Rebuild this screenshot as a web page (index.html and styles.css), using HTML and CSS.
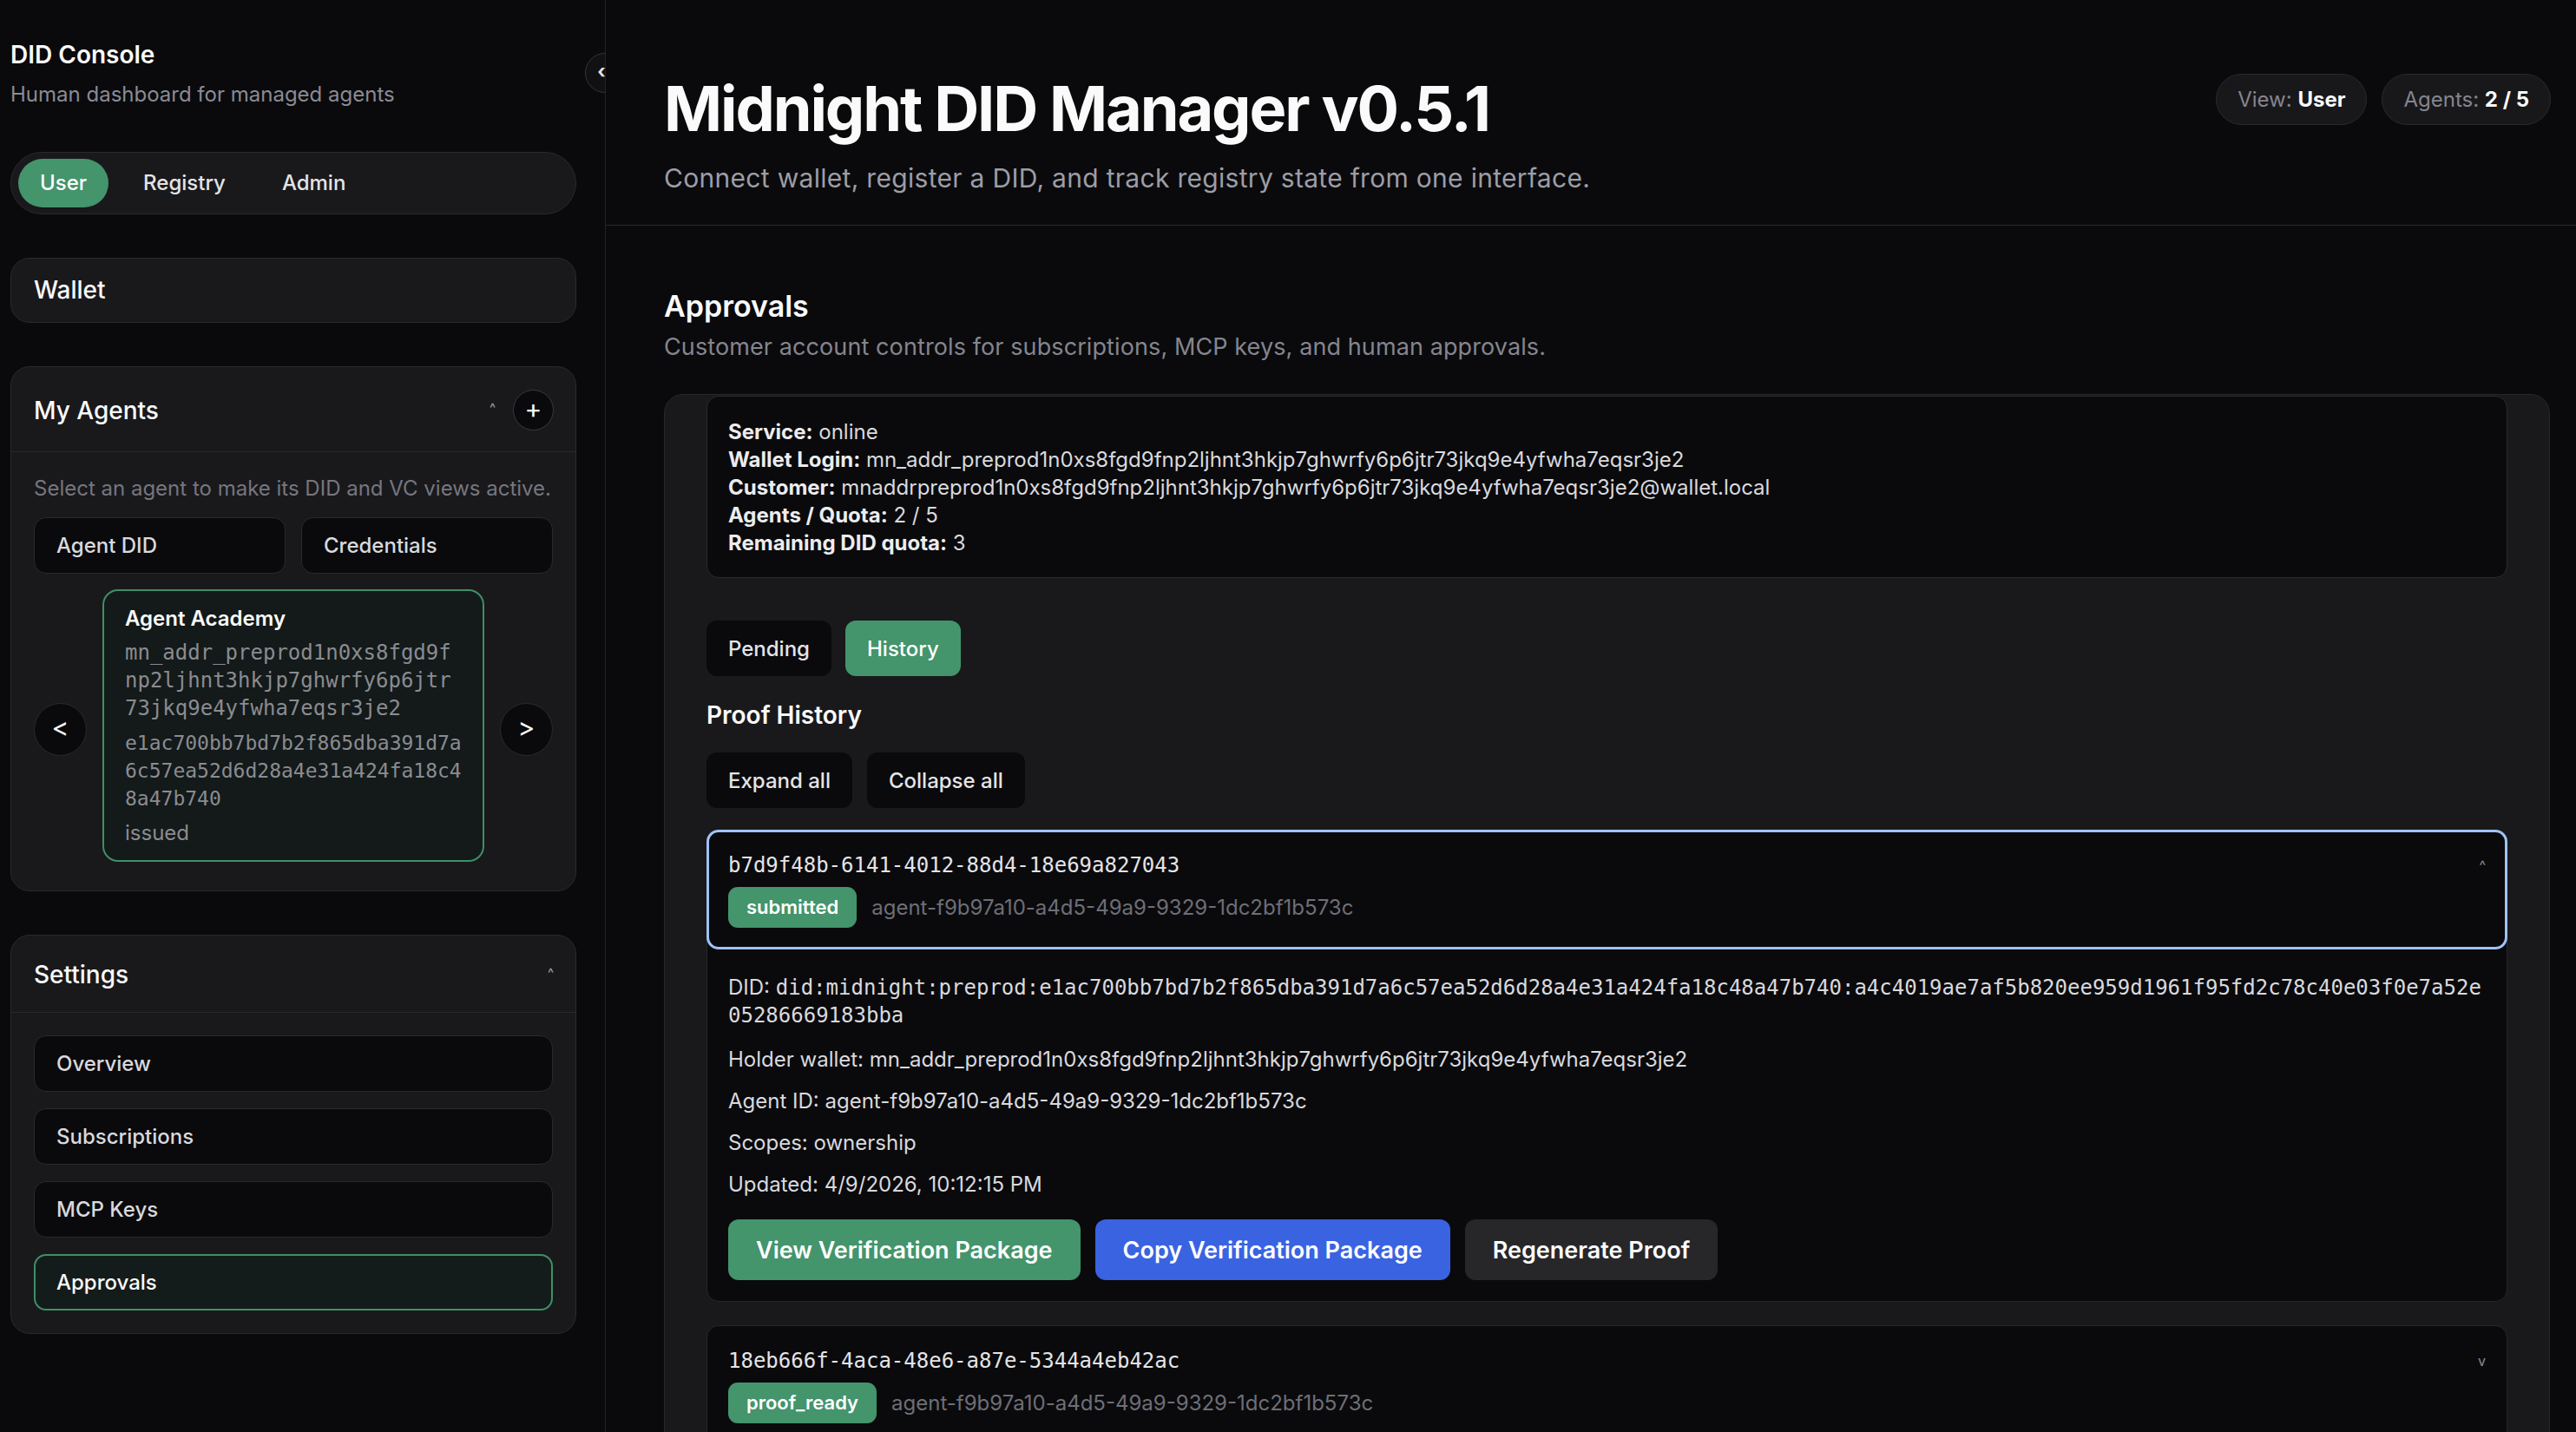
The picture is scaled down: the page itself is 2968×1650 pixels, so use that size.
FILE: index.html
```html
<!DOCTYPE html>
<html lang="en">
<head>
<meta charset="utf-8">
<title>Midnight DID Manager</title>
<link rel="stylesheet" href="styles.css">
</head>
<body>
<div class="app">
  <aside class="sidebar">
    <button class="collapse" aria-label="Collapse sidebar">&lsaquo;</button>
    <div class="brand">
      <div class="brand-title">DID Console</div>
      <div class="brand-sub">Human dashboard for managed agents</div>
    </div>

    <nav class="seg">
      <span class="seg-item active">User</span>
      <span class="seg-item">Registry</span>
      <span class="seg-item">Admin</span>
    </nav>

    <section class="card card-simple">
      <div class="card-title">Wallet</div>
    </section>

    <section class="card">
      <header class="card-head">
        <div class="card-title">My Agents</div>
        <div class="head-actions">
          <span class="caret">^</span>
          <button class="plus-btn" aria-label="Add agent">+</button>
        </div>
      </header>
      <div class="card-body">
        <p class="hint">Select an agent to make its DID and VC views active.</p>
        <div class="pair">
          <button class="dark-btn">Agent DID</button>
          <button class="dark-btn">Credentials</button>
        </div>
        <div class="carousel">
          <button class="nav-btn">&lt;</button>
          <div class="agent-card">
            <div class="agent-name">Agent Academy</div>
            <div class="agent-addr">mn_addr_preprod1n0xs8fgd9fnp2ljhnt3hkjp7ghwrfy6p6jtr73jkq9e4yfwha7eqsr3je2</div>
            <div class="agent-hash">e1ac700bb7bd7b2f865dba391d7a6c57ea52d6d28a4e31a424fa18c48a47b740</div>
            <div class="agent-status">issued</div>
          </div>
          <button class="nav-btn">&gt;</button>
        </div>
      </div>
    </section>

    <section class="card">
      <header class="card-head">
        <div class="card-title">Settings</div>
        <span class="caret">^</span>
      </header>
      <div class="card-body settings-body">
        <button class="dark-btn">Overview</button>
        <button class="dark-btn">Subscriptions</button>
        <button class="dark-btn">MCP Keys</button>
        <button class="dark-btn active">Approvals</button>
      </div>
    </section>
  </aside>

  <main class="main">
    <header class="topbar">
      <div>
        <h1 class="title">Midnight DID Manager v0.5.1</h1>
        <p class="subtitle">Connect wallet, register a DID, and track registry state from one interface.</p>
      </div>
      <div class="pills">
        <span class="pill">View: <b>User</b></span>
        <span class="pill">Agents: <b>2 / 5</b></span>
      </div>
    </header>

    <section class="content">
      <h2 class="section-title">Approvals</h2>
      <p class="section-sub">Customer account controls for subscriptions, MCP keys, and human approvals.</p>

      <div class="panel">
        <div class="info">
          <div><b>Service:</b> online</div>
          <div><b>Wallet Login:</b> mn_addr_preprod1n0xs8fgd9fnp2ljhnt3hkjp7ghwrfy6p6jtr73jkq9e4yfwha7eqsr3je2</div>
          <div><b>Customer:</b> mnaddrpreprod1n0xs8fgd9fnp2ljhnt3hkjp7ghwrfy6p6jtr73jkq9e4yfwha7eqsr3je2@wallet.local</div>
          <div><b>Agents / Quota:</b> 2 / 5</div>
          <div><b>Remaining DID quota:</b> 3</div>
        </div>

        <div class="btn-row tabs">
          <button class="tab">Pending</button>
          <button class="tab active">History</button>
        </div>

        <h3 class="sub-title">Proof History</h3>

        <div class="btn-row expand">
          <button class="tab">Expand all</button>
          <button class="tab">Collapse all</button>
        </div>

        <div class="items">
          <article class="item">
            <div class="item-head focused">
              <div class="item-main">
                <div class="item-id">b7d9f48b-6141-4012-88d4-18e69a827043</div>
                <div class="item-meta">
                  <span class="badge">submitted</span>
                  <span class="agent-ref">agent-f9b97a10-a4d5-49a9-9329-1dc2bf1b573c</span>
                </div>
              </div>
              <span class="chev">^</span>
            </div>
            <div class="item-body">
              <p class="did-line">DID: <span class="mono">did:midnight:preprod:e1ac700bb7bd7b2f865dba391d7a6c57ea52d6d28a4e31a424fa18c48a47b740:a4c4019ae7af5b820ee959d1961f95fd2c78c40e03f0e7a52e05286669183bba</span></p>
              <p>Holder wallet: mn_addr_preprod1n0xs8fgd9fnp2ljhnt3hkjp7ghwrfy6p6jtr73jkq9e4yfwha7eqsr3je2</p>
              <p>Agent ID: agent-f9b97a10-a4d5-49a9-9329-1dc2bf1b573c</p>
              <p>Scopes: ownership</p>
              <p>Updated: 4/9/2026, 10:12:15 PM</p>
              <div class="actions">
                <button class="act green">View Verification Package</button>
                <button class="act blue">Copy Verification Package</button>
                <button class="act gray">Regenerate Proof</button>
              </div>
            </div>
          </article>

          <article class="item">
            <div class="item-head">
              <div class="item-main">
                <div class="item-id">18eb666f-4aca-48e6-a87e-5344a4eb42ac</div>
                <div class="item-meta">
                  <span class="badge">proof_ready</span>
                  <span class="agent-ref">agent-f9b97a10-a4d5-49a9-9329-1dc2bf1b573c</span>
                </div>
              </div>
              <span class="chev">v</span>
            </div>
          </article>
        </div>
      </div>
    </section>
  </main>
</div>
</body>
</html>
```

FILE: styles.css
```css
* { box-sizing: border-box; }
html, body { margin: 0; height: 100%; }
body {
  background: #0a0a0c;
  color: #e4e4e7;
  font-family: Inter, "Noto Sans", sans-serif;
  overflow: hidden;
}
button { font-family: inherit; cursor: pointer; }
p { margin: 0; }

.app { display: flex; height: 100vh; }

/* ---------- Sidebar ---------- */
.sidebar {
  position: relative;
  overflow: hidden;
  width: 698px;
  flex: none;
  border-right: 1px solid #232327;
  padding: 45px 33px 0 12px;
  display: flex;
  flex-direction: column;
  gap: 50px;
}
.collapse {
  position: absolute;
  top: 61px;
  right: -23px;
  width: 46px;
  height: 46px;
  border-radius: 50%;
  border: 1px solid #35353a;
  background: #111113;
  color: #e4e4e7;
  font-size: 22px;
  font-weight: 700;
  padding: 0 8px 4px 0;
  display: flex;
  align-items: center;
  justify-content: center;
}
.brand-title { font-size: 28px; line-height: 36px; font-weight: 600; color: #fafafa; }
.brand-sub { margin-top: 12px; font-size: 24px; line-height: 32px; color: #8b8b94; }

.seg {
  display: flex;
  gap: 15px;
  padding: 7px 8px;
  border: 1px solid #2a2a2e;
  border-radius: 999px;
  background: #19191c;
}
.seg-item {
  font-size: 24px;
  line-height: 32px;
  padding: 12px 25px;
  border-radius: 999px;
  color: #e4e4e7;
  font-weight: 500;
}
.seg-item.active { background: #44946c; color: #fff; }

.card {
  background: #19191c;
  border: 1px solid #2a2a2e;
  border-radius: 22px;
}
.card-simple { padding: 18px 26px; }
.card-title { font-size: 28px; line-height: 38px; font-weight: 500; color: #fafafa; }
.card-simple .card-title { line-height: 37px; }
.card-head {
  display: flex;
  align-items: center;
  justify-content: space-between;
  padding: 26px 25px 24px 26px;
  border-bottom: 1px solid #2a2a2e;
}
.head-actions { display: flex; align-items: center; gap: 20px; }
.caret { font-size: 15px; color: #a1a1aa; line-height: 1; margin-top: -6px; }
.plus-btn {
  width: 47px;
  height: 47px;
  border-radius: 50%;
  border: 1px solid #3a3a3f;
  background: #0a0a0c;
  color: #fafafa;
  font-size: 30px;
  font-weight: 400;
  line-height: 1;
  padding: 0 0 3px;
  display: flex;
  align-items: center;
  justify-content: center;
}
.card-body {
  padding: 26px;
  display: flex;
  flex-direction: column;
  gap: 18px;
}
.settings-body { gap: 19px; }
.hint { font-size: 24px; line-height: 32px; color: #76767e; margin-bottom: -1px; }
.pair { display: grid; grid-template-columns: 1fr 1fr; gap: 18px; }
.dark-btn {
  height: 65px;
  text-align: left;
  padding: 0 25px;
  font-size: 24px;
  font-weight: 500;
  color: #d9d9de;
  background: #0a0a0c;
  border: 1px solid #2a2a2e;
  border-radius: 14px;
}
.dark-btn.active { border: 2px solid #3f8f66; background: #141c1b; color: #fafafa; padding-left: 24px; }

.carousel {
  display: grid;
  grid-template-columns: 61px 1fr 61px;
  gap: 18px;
  align-items: center;
  padding-bottom: 7px;
}
.nav-btn {
  width: 61px;
  height: 61px;
  margin-top: 8px;
  border-radius: 50%;
  border: 1px solid #2a2a2e;
  background: #0a0a0c;
  color: #fafafa;
  font-size: 30px;
  padding: 0 0 4px;
  display: flex;
  align-items: center;
  justify-content: center;
}
.agent-card {
  border: 2px solid #3f8f66;
  background: #131a19;
  border-radius: 18px;
  padding: 16px 24px 15px;
  display: flex;
  flex-direction: column;
  gap: 8px;
}
.agent-name { font-size: 24px; line-height: 32px; font-weight: 600; color: #fafafa; margin-bottom: -1px; }
.agent-addr, .agent-hash {
  font-family: "DejaVu Sans Mono", monospace;
  color: #8b8b92;
  line-height: 32px;
  word-break: break-all;
}
.agent-addr { font-size: 24px; }
.agent-hash { font-size: 23px; }
.agent-status { font-size: 24px; line-height: 32px; color: #8b8b92; }

/* ---------- Main ---------- */
.main { flex: 1; min-width: 0; overflow: hidden; }
.topbar {
  display: flex;
  justify-content: space-between;
  align-items: flex-start;
  padding: 85px 29px 34px 67px;
  border-bottom: 1px solid #27272a;
}
.title {
  margin: 0;
  font-size: 72px;
  line-height: 79px;
  font-weight: 700;
  letter-spacing: -2.1px;
  color: #fafafa;
}
.subtitle {
  margin-top: 21px;
  font-size: 30px;
  line-height: 40px;
  letter-spacing: 0.3px;
  color: #9d9da6;
}
.pills { display: flex; gap: 17px; }
.pill {
  height: 59px;
  line-height: 57px;
  padding: 0 24px;
  border: 1px solid #2a2a2e;
  border-radius: 999px;
  background: #18181b;
  font-size: 24px;
  color: #85858e;
  white-space: nowrap;
}
.pill b { color: #fafafa; font-weight: 700; }

.content { padding: 73px 30px 0 67px; }
.section-title { margin: 0; font-size: 34px; line-height: 40px; font-weight: 600; color: #fafafa; }
.section-sub {
  margin-top: 11px;
  font-size: 27px;
  line-height: 32px;
  letter-spacing: 0.1px;
  color: #85858e;
}

.panel {
  margin-top: 38px;
  background: #19191c;
  border: 1px solid #27272a;
  border-radius: 22px;
  padding: 1px 48px 40px;
}
.info {
  background: #0a0a0c;
  border: 1px solid #2a2a2e;
  border-radius: 14px;
  padding: 25px 24px 23px;
  font-size: 24px;
  line-height: 32px;
  color: #d9d9de;
}
.info b { font-weight: 700; color: #ececef; }

.btn-row { display: flex; gap: 16px; }
.tabs { margin-top: 49px; }
.tab {
  height: 64px;
  padding: 0 25px;
  border: none;
  border-radius: 12px;
  background: #0a0a0c;
  color: #e4e4e7;
  font-size: 24px;
  font-weight: 500;
}
.tab.active { background: #44946c; color: #fff; }
.sub-title { margin: 27px 0 0; font-size: 28px; line-height: 36px; font-weight: 600; color: #fafafa; }
.expand { margin-top: 25px; gap: 17px; }

.items { margin-top: 25px; display: flex; flex-direction: column; gap: 27px; }
.item {
  background: #0a0a0c;
  border: 1px solid #27272a;
  border-radius: 14px;
}
.item-head {
  display: flex;
  align-items: flex-start;
  justify-content: space-between;
  padding: 24px 24px 24px;
  border-radius: 13px;
}
.item-head.focused { outline: 3px solid #a0c2f6; outline-offset: -2px; }
.item-id {
  font-family: "DejaVu Sans Mono", monospace;
  font-size: 24px;
  line-height: 32px;
  color: #e4e4e7;
}
.item-meta { display: flex; align-items: center; gap: 17px; margin-top: 9px; }
.badge {
  height: 47px;
  line-height: 47px;
  padding: 0 21px;
  border-radius: 11px;
  background: #44946c;
  color: #fff;
  font-size: 22px;
  font-weight: 600;
}
.agent-ref { font-size: 24px; color: #6e6e77; }
.chev { font-size: 16px; color: #8b8b92; line-height: 32px; }

.item-body {
  padding: 29px 24px 24px;
  display: flex;
  flex-direction: column;
  gap: 16px;
  font-size: 24px;
  line-height: 32px;
  color: #d9d9de;
}
.did-line { margin-bottom: 3px; }
.mono { font-family: "DejaVu Sans Mono", monospace; word-break: break-all; }
.actions { display: flex; gap: 17px; margin-top: 8px; }
.act {
  height: 70px;
  padding: 0 32px;
  border: none;
  border-radius: 12px;
  color: #fff;
  font-size: 27px;
  font-weight: 600;
}
.act.green { background: #44946c; }
.act.blue { background: #3a63e2; }
.act.gray { background: #27272a; }
```
